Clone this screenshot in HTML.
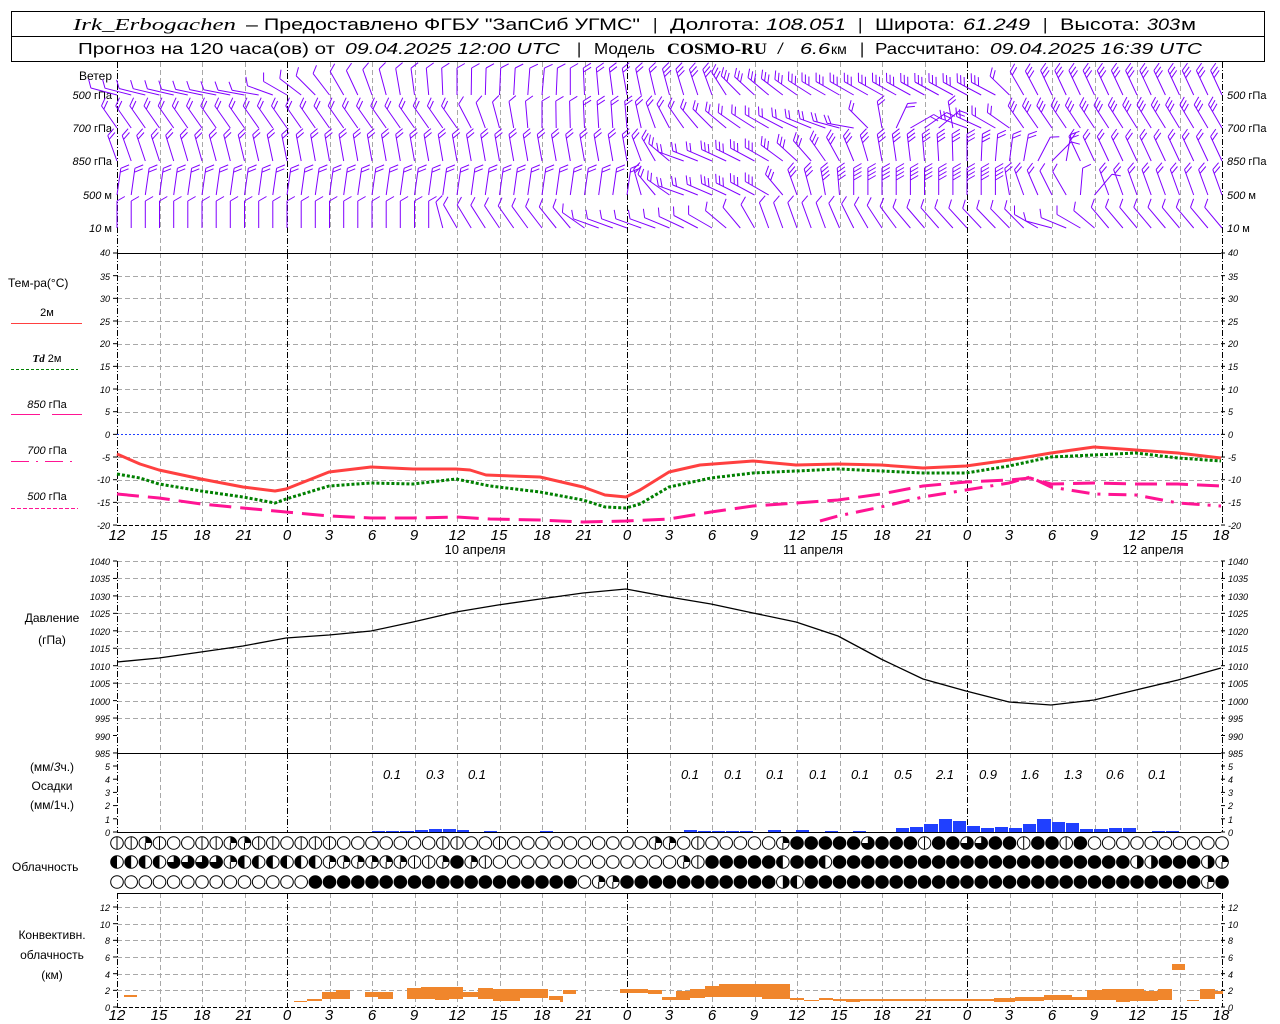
<!DOCTYPE html>
<html><head><meta charset="utf-8"><style>
html,body{margin:0;padding:0;background:#fff;width:1280px;height:1024px;overflow:hidden}
svg{display:block}
text{font-family:"Liberation Sans","DejaVu Sans",sans-serif;fill:#000}
.it{font-style:italic}
.sr{font-family:"Liberation Serif",serif}
.tk{font-size:9px;font-style:italic}
.tl{font-size:15px;font-style:italic}
.lb{font-size:12px}
</style></head><body>
<svg id="s" width="1280" height="1024" viewBox="0 0 1280 1024" xmlns="http://www.w3.org/2000/svg">
<rect x="11.5" y="11.5" width="1253" height="50" fill="none" stroke="#000"/>
<line x1="11" y1="36.5" x2="1265" y2="36.5" stroke="#000"/>
<g font-size="17">
<text x="73" y="30" class="sr it" textLength="163" lengthAdjust="spacingAndGlyphs">Irk_Erbogachen</text>
<text x="246" y="30" textLength="394" lengthAdjust="spacingAndGlyphs">– Предоставлено ФГБУ "ЗапСиб УГМС"</text>
<text x="653" y="30">|</text>
<text x="670" y="30" textLength="90" lengthAdjust="spacingAndGlyphs">Долгота:</text>
<text x="766" y="30" class="it" textLength="80" lengthAdjust="spacingAndGlyphs">108.051</text>
<text x="858" y="30">|</text>
<text x="875" y="30" textLength="80" lengthAdjust="spacingAndGlyphs">Широта:</text>
<text x="963" y="30" class="it" textLength="67" lengthAdjust="spacingAndGlyphs">61.249</text>
<text x="1043" y="30">|</text>
<text x="1060" y="30" textLength="80" lengthAdjust="spacingAndGlyphs">Высота:</text>
<text x="1147" y="30" class="it" textLength="33" lengthAdjust="spacingAndGlyphs">303</text>
<text x="1181" y="30" textLength="15" lengthAdjust="spacingAndGlyphs">м</text>
</g>
<g font-size="16">
<text x="78" y="54" textLength="257" lengthAdjust="spacingAndGlyphs">Прогноз на 120 часа(ов) от</text>
<text x="345" y="54" class="it" textLength="215" lengthAdjust="spacingAndGlyphs">09.04.2025 12:00 UTC</text>
<text x="577" y="54">|</text>
<text x="594" y="54" textLength="61" lengthAdjust="spacingAndGlyphs">Модель</text>
<text x="667" y="54" class="sr" font-weight="bold" textLength="100" lengthAdjust="spacingAndGlyphs">COSMO-RU</text>
<text x="778" y="54" class="it">/</text>
<text x="800" y="54" class="it" textLength="30" lengthAdjust="spacingAndGlyphs">6.6</text>
<text x="831" y="54" font-size="14">км</text>
<text x="860" y="54">|</text>
<text x="875" y="54" textLength="105" lengthAdjust="spacingAndGlyphs">Рассчитано:</text>
<text x="990" y="54" class="it" textLength="212" lengthAdjust="spacingAndGlyphs">09.04.2025 16:39 UTC</text>
</g>

<g id="grid"></g>

<g class="lb">
<text x="112" y="80" text-anchor="end">Ветер</text>
<text x="112" y="99" text-anchor="end" font-size="11"><tspan class="it">500</tspan> гПа</text>
<text x="112" y="132" text-anchor="end" font-size="11"><tspan class="it">700</tspan> гПа</text>
<text x="112" y="165" text-anchor="end" font-size="11"><tspan class="it">850</tspan> гПа</text>
<text x="112" y="199" text-anchor="end" font-size="11"><tspan class="it">500</tspan>  м</text>
<text x="112" y="232" text-anchor="end" font-size="11"><tspan class="it">10</tspan>   м</text>
<text x="1227" y="99" font-size="11"><tspan class="it">500</tspan> гПа</text>
<text x="1227" y="132" font-size="11"><tspan class="it">700</tspan> гПа</text>
<text x="1227" y="165" font-size="11"><tspan class="it">850</tspan> гПа</text>
<text x="1227" y="199" font-size="11"><tspan class="it">500</tspan>  м</text>
<text x="1227" y="232" font-size="11"><tspan class="it">10</tspan>   м</text>

<text x="8" y="287">Тем-ра(°C)</text>
<text x="47" y="316" text-anchor="middle" font-size="11">2м</text>
<line x1="11" y1="323.5" x2="82" y2="323.5" stroke="#ff4040"/>
<text x="47" y="362" text-anchor="middle" font-size="11"><tspan class="it sr" font-weight="bold">Td</tspan>  2м</text>
<line x1="11" y1="369.5" x2="78" y2="369.5" stroke="#008000" stroke-dasharray="3,2"/>
<text x="47" y="408" text-anchor="middle" font-size="11"><tspan class="it">850</tspan> гПа</text>
<line x1="11" y1="414.5" x2="40" y2="414.5" stroke="#ff1493"/><line x1="52" y1="414.5" x2="82" y2="414.5" stroke="#ff1493"/>
<text x="47" y="454" text-anchor="middle" font-size="11"><tspan class="it">700</tspan> гПа</text>
<line x1="11" y1="461.5" x2="78" y2="461.5" stroke="#ff1493" stroke-dasharray="18,7,2,7"/>
<text x="47" y="500" text-anchor="middle" font-size="11"><tspan class="it">500</tspan> гПа</text>
<line x1="11" y1="508.5" x2="78" y2="508.5" stroke="#ff1493" stroke-dasharray="4,2"/>

<text x="52" y="622" text-anchor="middle">Давление</text>
<text x="52" y="644" text-anchor="middle">(гПа)</text>

<text x="52" y="771" text-anchor="middle">(мм/<tspan class="it">3</tspan>ч.)</text>
<text x="52" y="790" text-anchor="middle">Осадки</text>
<text x="52" y="809" text-anchor="middle">(мм/1ч.)</text>

<text x="12" y="871">Облачность</text>

<text x="52" y="939" text-anchor="middle">Конвективн.</text>
<text x="52" y="959" text-anchor="middle">облачность</text>
<text x="52" y="979" text-anchor="middle">(км)</text>
</g>

<g class="tk">
<text x="110" y="256" text-anchor="end">40</text><text x="110" y="280" text-anchor="end">35</text><text x="110" y="302" text-anchor="end">30</text><text x="110" y="325" text-anchor="end">25</text><text x="110" y="347" text-anchor="end">20</text><text x="110" y="370" text-anchor="end">15</text><text x="110" y="393" text-anchor="end">10</text><text x="110" y="415" text-anchor="end">5</text><text x="110" y="438" text-anchor="end">0</text><text x="110" y="461" text-anchor="end">-5</text><text x="110" y="483" text-anchor="end">-10</text><text x="110" y="506" text-anchor="end">-15</text><text x="110" y="529" text-anchor="end">-20</text>
<text x="1228" y="256">40</text><text x="1228" y="280">35</text><text x="1228" y="302">30</text><text x="1228" y="325">25</text><text x="1228" y="347">20</text><text x="1228" y="370">15</text><text x="1228" y="393">10</text><text x="1228" y="415">5</text><text x="1228" y="438">0</text><text x="1228" y="461">-5</text><text x="1228" y="483">-10</text><text x="1228" y="506">-15</text><text x="1228" y="529">-20</text>

<text x="110" y="565" text-anchor="end">1040</text><text x="110" y="582" text-anchor="end">1035</text><text x="110" y="600" text-anchor="end">1030</text><text x="110" y="617" text-anchor="end">1025</text><text x="110" y="635" text-anchor="end">1020</text><text x="110" y="652" text-anchor="end">1015</text><text x="110" y="670" text-anchor="end">1010</text><text x="110" y="687" text-anchor="end">1005</text><text x="110" y="705" text-anchor="end">1000</text><text x="110" y="722" text-anchor="end">995</text><text x="110" y="740" text-anchor="end">990</text><text x="110" y="757" text-anchor="end">985</text>
<text x="1228" y="565">1040</text><text x="1228" y="582">1035</text><text x="1228" y="600">1030</text><text x="1228" y="617">1025</text><text x="1228" y="635">1020</text><text x="1228" y="652">1015</text><text x="1228" y="670">1010</text><text x="1228" y="687">1005</text><text x="1228" y="705">1000</text><text x="1228" y="722">995</text><text x="1228" y="740">990</text><text x="1228" y="757">985</text>

<text x="110" y="770" text-anchor="end">5</text><text x="110" y="783" text-anchor="end">4</text><text x="110" y="796" text-anchor="end">3</text><text x="110" y="809" text-anchor="end">2</text><text x="110" y="823" text-anchor="end">1</text><text x="110" y="836" text-anchor="end">0</text>
<text x="1228" y="770">5</text><text x="1228" y="783">4</text><text x="1228" y="796">3</text><text x="1228" y="809">2</text><text x="1228" y="823">1</text><text x="1228" y="836">0</text>

<text x="110" y="911" text-anchor="end">12</text><text x="110" y="928" text-anchor="end">10</text><text x="110" y="944" text-anchor="end">8</text><text x="110" y="961" text-anchor="end">6</text><text x="110" y="978" text-anchor="end">4</text><text x="110" y="994" text-anchor="end">2</text><text x="110" y="1011" text-anchor="end">0</text>
<text x="1228" y="911">12</text><text x="1228" y="928">10</text><text x="1228" y="944">8</text><text x="1228" y="961">6</text><text x="1228" y="978">4</text><text x="1228" y="994">2</text><text x="1228" y="1011">0</text>
</g>

<g class="tl" text-anchor="middle">
<text x="117" y="540">12</text><text x="159" y="540">15</text><text x="202" y="540">18</text><text x="244" y="540">21</text><text x="287" y="540">0</text><text x="329" y="540">3</text><text x="372" y="540">6</text><text x="414" y="540">9</text><text x="457" y="540">12</text><text x="499" y="540">15</text><text x="542" y="540">18</text><text x="584" y="540">21</text><text x="627" y="540">0</text><text x="669" y="540">3</text><text x="712" y="540">6</text><text x="754" y="540">9</text><text x="797" y="540">12</text><text x="839" y="540">15</text><text x="882" y="540">18</text><text x="924" y="540">21</text><text x="967" y="540">0</text><text x="1009" y="540">3</text><text x="1052" y="540">6</text><text x="1094" y="540">9</text><text x="1137" y="540">12</text><text x="1179" y="540">15</text><text x="1221" y="540">18</text>
<text x="117" y="1020">12</text><text x="159" y="1020">15</text><text x="202" y="1020">18</text><text x="244" y="1020">21</text><text x="287" y="1020">0</text><text x="329" y="1020">3</text><text x="372" y="1020">6</text><text x="414" y="1020">9</text><text x="457" y="1020">12</text><text x="499" y="1020">15</text><text x="542" y="1020">18</text><text x="584" y="1020">21</text><text x="627" y="1020">0</text><text x="669" y="1020">3</text><text x="712" y="1020">6</text><text x="754" y="1020">9</text><text x="797" y="1020">12</text><text x="839" y="1020">15</text><text x="882" y="1020">18</text><text x="924" y="1020">21</text><text x="967" y="1020">0</text><text x="1009" y="1020">3</text><text x="1052" y="1020">6</text><text x="1094" y="1020">9</text><text x="1137" y="1020">12</text><text x="1179" y="1020">15</text><text x="1221" y="1020">18</text>
</g>
<g font-size="13" text-anchor="middle">
<text x="475" y="554">10 апреля</text><text x="813" y="554">11 апреля</text><text x="1153" y="554">12 апреля</text>
</g>
<g font-size="13" class="it" text-anchor="middle">
<text x="392" y="779">0.1</text><text x="435" y="779">0.3</text><text x="477" y="779">0.1</text>
<text x="690" y="779">0.1</text><text x="733" y="779">0.1</text><text x="775" y="779">0.1</text><text x="818" y="779">0.1</text><text x="860" y="779">0.1</text><text x="903" y="779">0.5</text><text x="945" y="779">2.1</text><text x="988" y="779">0.9</text><text x="1030" y="779">1.6</text><text x="1073" y="779">1.3</text><text x="1115" y="779">0.6</text><text x="1157" y="779">0.1</text>
</g>

<line x1="117" y1="434.5" x2="1221" y2="434.5" stroke="#2040ff" stroke-dasharray="2,2"/>
<g fill="none" stroke-width="3" stroke-linejoin="round">
<polyline stroke="#ff1493" stroke-dasharray="22,9" points="117,494 159,498 201,504 243,508 286,512 329,516 371,518 413,518 456,517 490,519 540,520 583,522 626,521 669,519 711,512 753,506 796,503 838,500 881,494 923,486 966,482 1009,480 1030,478 1051,484 1094,483 1136,484 1178,484 1221,486"/>
<polyline stroke="#ff1493" stroke-dasharray="18,8,3,8" points="820,521 838,516 881,507 923,497 966,490 1009,483 1030,477 1051,487 1094,494 1136,495 1178,503 1221,506"/>
<polyline stroke="#008000" stroke-dasharray="3,2" points="117,474 140,478 159,484 201,491 243,497 275,503 286,499 329,486 371,483 413,484 456,479 490,486 540,492 583,500 605,507 626,508 640,504 669,487 711,478 753,473 796,471 838,469 881,471 923,473 966,473 1009,466 1051,457 1094,455 1136,453 1178,458 1221,461"/>
<polyline stroke="#ff4040" points="117,454 140,464 159,470 201,479 243,487 275,491 286,489 329,472 371,467 413,469 456,469 470,470 486,475 540,477 583,487 605,495 626,497 640,490 669,472 700,465 753,461 796,465 838,464 881,465 923,468 966,466 1009,460 1051,453 1094,447 1136,450 1178,453 1221,458"/>
</g>
<polyline fill="none" stroke="#000" stroke-width="1.3" points="117,662 159,658 201,652 243,646 286,638 329,635 371,631 413,622 456,612 498,605 540,599 583,593 626,589 669,597 711,604 753,613 796,622 838,636 881,659 923,679 966,691 1009,702 1051,705 1094,700 1136,690 1178,680 1221,668"/>

<g id="dyn"></g>
</svg>
<script>
(function(){
var NS="http://www.w3.org/2000/svg";
var g=document.getElementById('grid'),d=document.getElementById('dyn');
function el(p,tag,a){var e=document.createElementNS(NS,tag);for(var k in a)e.setAttribute(k,a[k]);p.appendChild(e);return e;}
function X(i){return 117+i*14.167;}
function hl(y,c,da,x1,x2){el(g,'line',{x1:x1||117,x2:x2||1221,y1:y+0.5,y2:y+0.5,stroke:c,'stroke-dasharray':da||'none'});}
for(var t=35;t>=-15;t-=5){if(t!==0)hl(Math.round(253+(40-t)*4.533),'#a8a8a8','5,3');}
for(var p=1040;p>990;p-=5){hl(Math.round(561+(1040-p)*3.491),'#a8a8a8','5,3');}
for(var k=2;k<=12;k+=2){hl(Math.round(1007-k*8.33),'#a8a8a8','5,3');}
var spans=[[62,253],[253,525],[561,753],[753,832],[893,1007]];
for(var j=0;j<=26;j++){var x=Math.round(117+j*42.5)+0.5;var zero=(j%8==4)||j==0||j==26;
 spans.forEach(function(s){el(g,'line',{x1:x,x2:x,y1:s[0],y2:s[1],stroke:zero?'#000':'#a8a8a8','stroke-dasharray':zero?'6,2,1,2':'5,3'});});}
hl(253,'#000');hl(525,'#000','4,2');hl(753,'#000');hl(832,'#000');hl(893,'#000');hl(1007,'#000','4,2');
function tk(a,b,st){for(var yy=a;yy<=b+0.5;yy+=st){el(g,'line',{x1:113,x2:117,y1:yy,y2:yy,stroke:'#000'});el(g,'line',{x1:1221,x2:1225,y1:yy,y2:yy,stroke:'#000'});}}
tk(253,525,22.67);tk(561,753,17.45);tk(766,832,13.2);tk(907,1007,16.67);
var pb=[[372,386,1],[386,400,1],[400,415,1],[415,429,2],[429,443,3],[443,457,3],[457,470,2],[484,498,1],[540,554,1],[684,698,2],[698,712,1],[712,726,1],[726,740,1],[740,754,1],[768,782,2],[796,810,2],[825,839,1],[853,867,1],
[896,910,4],[910,924,5],[924,939,8],[939,953,13],[953,967,11],[967,981,6],[981,995,4],[995,1009,5],[1009,1023,4],[1023,1037,8],[1037,1052,13],[1052,1066,10],[1066,1080,9],[1080,1094,3],[1094,1109,3],[1109,1123,4],[1123,1137,4],[1152,1166,1],[1166,1180,1]];
pb.forEach(function(b){el(d,'rect',{x:b[0],y:832-b[2],width:b[1]-b[0]-1,height:b[2],fill:'#2040ff'});});
var cb=[[124,137,995,997],[294,307,1001,1002],[307,322,999,1001],[322,336,992,999],[336,350,990,999],[365,378,992,997],[378,393,992,999],[407,421,988,999],[421,435,987,999],[435,449,987,1000],[449,463,987,999],[463,478,992,997],[478,493,988,999],[493,520,989,1001],[520,548,989,998],[549,560,996,1000],[560,563,996,1002],[563,576,990,994],[620,634,989,993],[634,648,989,993],[648,662,990,994],[662,676,997,1000],[676,690,991,1000],[690,705,989,998],[705,719,986,997],[719,762,984,997],[762,775,984,999],[775,790,984,999],[790,804,998,1000],[804,819,1000,1001],[819,833,998,1000],[833,846,999,1001],[846,860,999,1002],[860,994,999,1001],[994,1015,998,1002],[1015,1030,997,1001],[1030,1044,997,1001],[1044,1072,995,1000],[1072,1087,997,1000],[1087,1102,990,1000],[1102,1116,989,1000],[1116,1130,989,1002],[1130,1144,989,1001],[1144,1158,991,1001],[1158,1172,989,1000],[1172,1185,964,970],[1187,1199,1000,1001],[1200,1215,989,999],[1215,1223,991,994]];
cb.forEach(function(b){el(d,'rect',{x:b[0],y:b[2],width:b[1]-b[0],height:b[3]-b[2],fill:'#f0862c'});});
var rows=[[843,"VVQVOOVVQQVVOVVVOOOOOOOVVOOV"+"OOOOOOOOOO"+"QQOV"+"OOOOO"+"Q"+"FFFFF"+"T"+"FFF"+"V"+"FF"+"TT"+"FF"+"V"+"FF"+"V"+"F"+"OOOOOOOOOO"],
[862,"HHHHTTTTQHHHHHHQQQQQQVVQFQVO"+"OOOOOOOOOOOO"+"QV"+"FFFFF"+"H"+"FF"+"H"+"FFFFFFFFFFFFFFFFFFFFF"+"RR"+"FFF"+"R"+"Q"],
[882,"OOOOOOOOOOOOOO"+"FFFFFFFFFFFFFFFFFFF"+"O"+"QQ"+"FFFFFFFFFFF"+"RH"+"FFFFFFFFFFFFFFFFFFFFFFFFFFFF"+"Q"+"F"]];
var r=6.3;
rows.forEach(function(row){var y=row[0],s=row[1];for(var i=0;i<s.length&&i<79;i++){var cx=X(i),c=s[i];
 el(d,'circle',{cx:cx,cy:y,r:r,fill:c=='F'?'#000':'#fff',stroke:'#000','stroke-width':1});
 if(c=='V'){el(d,'line',{x1:cx,x2:cx,y1:y-r,y2:y+r,stroke:'#000'});}
 if(c=='H'){el(d,'path',{d:'M'+cx+','+(y-r)+' A'+r+','+r+' 0 0 0 '+cx+','+(y+r)+' Z',fill:'#000'});}
 if(c=='R'){el(d,'path',{d:'M'+cx+','+(y-r)+' A'+r+','+r+' 0 0 1 '+cx+','+(y+r)+' Z',fill:'#000'});}
 if(c=='Q'){el(d,'path',{d:'M'+cx+','+y+' L'+cx+','+(y-r)+' A'+r+','+r+' 0 0 1 '+(cx+r)+','+y+' Z',fill:'#000'});el(d,'line',{x1:cx,x2:cx,y1:y,y2:y+r,stroke:'#000'});}
 if(c=='T'){el(d,'path',{d:'M'+cx+','+y+' L'+cx+','+(y-r)+' A'+r+','+r+' 0 1 1 '+(cx-r)+','+y+' Z',fill:'#000'});}
}});
var lv=[[95,[[0,-75,1],[10,-80,1],[12,-60,1],[16,-30,1],[20,-10,1],[24,0,1],[30,5,1],[36,-10,2],[42,-20,3],[44,-45,3],[50,-60,3],[62,-62,3],[64,-30,2],[66,-25,3],[78,-25,3]]],
[128,[[0,-35,2],[24,-35,2],[26,-20,1],[30,0,1],[36,-5,2],[40,-35,2],[44,-55,2],[50,-70,2],[52,-80,2],[56,60,2],[58,50,2],[60,-70,2],[63,-55,2],[64,-35,3],[78,-30,3]]],
[161,[[0,-20,2],[14,-10,2],[36,-10,2],[38,-30,2],[40,-70,2],[46,-60,3],[50,-35,3],[54,-10,3],[60,0,3],[64,10,2],[66,45,1],[68,-25,2],[78,-25,2]]],
[195,[[0,8,2],[36,8,2],[38,-40,2],[40,-70,2],[46,-60,3],[48,-20,3],[52,0,4],[62,0,4],[64,-20,2],[67,-30,1],[69,40,1],[70,-20,2],[78,-20,2]]],
[228,[[0,0,1],[22,0,1],[24,-30,1],[32,-40,1],[34,-70,1],[38,-70,1],[42,-60,1],[46,-20,1],[50,-20,1],[56,-40,1],[64,-45,1],[66,-75,1],[68,-60,1],[70,-40,1],[78,-40,1]]]];
lv.forEach(function(L){var y=L[0],cp=L[1];
 for(var i=0;i<=78;i++){var a=0,n=1;for(var k=0;k<cp.length-1;k++){if(i>=cp[k][0]&&i<=cp[k+1][0]){var f=(i-cp[k][0])/((cp[k+1][0]-cp[k][0])||1);a=cp[k][1]+(cp[k+1][1]-cp[k][1])*f;n=f<0.5?cp[k][2]:cp[k+1][2];break;}}
  var rad=a*Math.PI/180,dx=Math.sin(rad),dy=-Math.cos(rad),len=27,x0=X(i),y0=y;
  var tx=x0+dx*len,ty=y0+dy*len;var pth='M'+x0.toFixed(1)+','+y0+' L'+tx.toFixed(1)+','+ty.toFixed(1);
  var c=Math.cos(Math.PI/3),s=Math.sin(Math.PI/3),fx=dx*c-dy*s,fy=dx*s+dy*c;
  for(var m=0;m<n;m++){var px=tx-dx*m*4,py=ty-dy*m*4;pth+=' M'+px.toFixed(1)+','+py.toFixed(1)+' l'+(fx*9).toFixed(1)+','+(fy*9).toFixed(1);}
  el(d,'path',{d:pth,stroke:'#8000ff',fill:'none','stroke-width':1});
 }});
})();
</script>
</body></html>
